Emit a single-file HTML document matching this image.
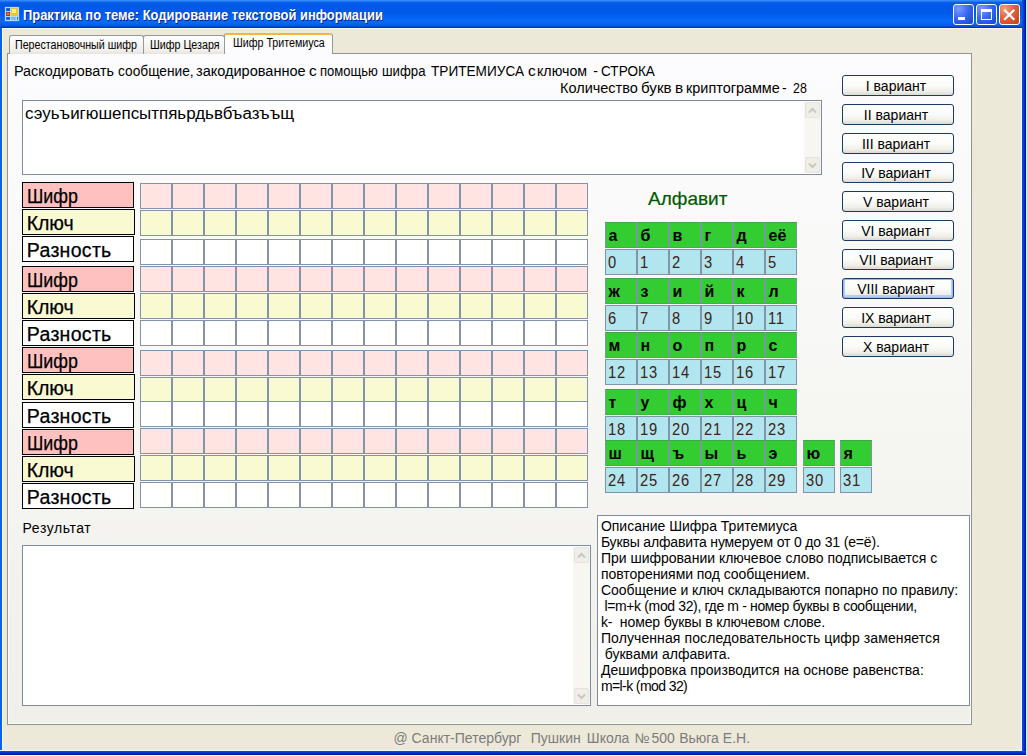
<!DOCTYPE html>
<html><head><meta charset="utf-8">
<style>
*{box-sizing:border-box}
html,body{margin:0;padding:0}
body{width:1027px;height:756px;position:relative;overflow:hidden;background:#ECE9D8;font-family:"Liberation Sans",sans-serif;color:#000}
.a{position:absolute}
.tx{white-space:pre}
#title{left:0;top:0;width:1027px;height:28px;background:linear-gradient(#3a93ff 0px,#2a80f8 1px,#0a5ee8 2.5px,#0058e6 5px,#0059e8 13px,#0466f4 19px,#086afa 21px,#0464f2 24px,#0054dc 26px,#0036b0 27.5px)}
.tb{width:21px;height:21px;top:4px;border:1px solid #fff;border-radius:3px;background:radial-gradient(circle at 25% 20%,#7a9cff,#3a6af0 45%,#2050e0 80%,#1a48d8)}
#tclose{background:radial-gradient(circle at 25% 20%,#f0a080,#e06040 45%,#d04a20 80%,#c04018)}
#page{left:7px;top:53px;width:965px;height:672px;border:1px solid #8f9494;box-shadow:inset -1px -1px 0 #fbfbf8,inset 1px 0 0 #fcfcfc;background:linear-gradient(#fcfcfe 0%,#f8f8f6 40%,#f0efe9 100%)}
.tab{top:35px;height:19px;border:1px solid #919b9c;border-bottom:none;border-radius:3px 3px 0 0;background:linear-gradient(#fefefe,#f0efea 80%,#e6e4dc);font-size:11px;white-space:pre;padding-top:2px}
.lb{left:22px;width:112px;height:26px;border:1px solid #000}
.c{width:32px;height:26px;border:1px solid #8294ac}
.g{width:32px;height:26px;border:1px solid #7a98a0;border-top-color:#3aa846;border-bottom-color:#36b83c;background:#33cc33}
.bl{width:32px;height:26px;border:1px solid #8294ac;background:#b2e6ee}
.btn{left:842px;width:112px;height:21px;border:1px solid #1a3a68;border-radius:3px;background:linear-gradient(#ffffff 0%,#fbfbf9 50%,#f0efe8 80%,#dcdad0 100%);font-size:14px;text-align:center;line-height:21px;white-space:pre}
.btn span{display:inline-block;transform:scaleX(1.0);position:relative;left:-2px}
.sb{background:#f4f3ee}
</style></head><body>
<div id="title" class="a"></div>
<div class="a tx" style="left:22.87680412371134px;top:6.19px;font-size:14px;line-height:18px;transform:scaleX(0.9232);transform-origin:0 0;font-weight:bold;color:#fff;text-shadow:1px 1px 0 #0a1e8c">Практика по теме: Кодирование текстовой информации</div>
<div class="a" style="left:0;top:28px;width:1027px;height:1px;background:#f6f6fc"></div>
<div class="a" style="left:0;top:28px;width:2px;height:723px;background:#0a60f0"></div>
<div class="a" style="left:2px;top:28px;width:1px;height:723px;background:#f8f8fc"></div>
<div class="a" style="left:1021px;top:28px;width:1px;height:723px;background:#f8f8fc"></div>
<div class="a" style="left:1022px;top:0px;width:4px;height:755px;background:linear-gradient(90deg,#0a58ee,#0030c0 60%,#001890)"></div>
<div class="a" style="left:1026px;top:0;width:1px;height:756px;background:#dce6fa"></div>
<div class="a" style="left:0;top:750px;width:1022px;height:1px;background:#f4f6fc"></div>
<div class="a" style="left:0;top:751px;width:1026px;height:4px;background:linear-gradient(#0a4ee0,#0030c0 50%,#00168c)"></div>
<div class="a" style="left:0;top:755px;width:1027px;height:1px;background:#f8f8fc"></div>
<div class="a tb" style="left:953px"></div>
<div class="a tb" style="left:976px"></div>
<div class="a tb" id="tclose" style="left:999px"></div>
<div class="a" style="left:958px;top:17px;width:7px;height:3px;background:#fff"></div>
<div class="a" style="left:981px;top:9px;width:11px;height:11px;border:1px solid #fff;border-top:3px solid #fff"></div>
<svg class="a" style="left:999px;top:4px" width="21" height="21"><path d="M5.2 5.7 L15.3 15.8 M15.3 5.7 L5.2 15.8" stroke="#fff" stroke-width="2.3" stroke-linecap="butt"/></svg>
<svg class="a" style="left:0;top:0" width="24" height="26"><rect x="5.5" y="7.5" width="13" height="13" fill="none" stroke="#b4dcff" stroke-width="1.2"/><path d="M10.5 7.5V20.5 M5.5 11.5H10.5 M5.5 16.5H18.5 M16.5 16.5V20.5" stroke="#b4dcff" stroke-width="1"/><rect x="6" y="12" width="4" height="4" fill="#c03020"/><rect x="7" y="13" width="2" height="2" fill="#f07050"/><rect x="11" y="8" width="7" height="8" fill="#e8c830"/><rect x="12" y="9" width="4" height="4" fill="#fff080"/><rect x="11" y="17" width="5" height="3" fill="#80b8f0"/></svg>
<div id="page" class="a"></div>
<div class="a tab" style="left:9px;width:135px"></div>
<div class="a tab" style="left:143px;width:82px"></div>
<div class="a tab" style="left:224px;width:109px;top:33px;height:21px;background:#fcfcfe;border-top:2px solid #f5b445"></div>
<div class="a tx" style="left:15.2px;top:37.96px;font-size:12px;line-height:15px;transform:scaleX(0.89);transform-origin:0 0">Перестановочный шифр</div>
<div class="a tx" style="left:150.2px;top:37.96px;font-size:12px;line-height:15px;transform:scaleX(0.89);transform-origin:0 0">Шифр Цезаря</div>
<div class="a tx" style="left:232.5px;top:35.96px;font-size:12px;line-height:15px;transform:scaleX(0.89);transform-origin:0 0">Шифр Тритемиуса</div>
<div class="a tx" style="left:14.072916666666666px;top:62.09px;font-size:14px;line-height:18px;transform:scaleX(1.0271);transform-origin:0 0;">Раскодировать</div>
<div class="a tx" style="left:117.81866666666666px;top:62.09px;font-size:14px;line-height:18px;transform:scaleX(0.9813);transform-origin:0 0;">сообщение,</div>
<div class="a tx" style="left:195.6625px;top:62.09px;font-size:14px;line-height:18px;transform:scaleX(1.0375);transform-origin:0 0;">закодированное</div>
<div class="a tx" style="left:309.29999999999995px;top:62.09px;font-size:14px;line-height:18px;transform:scaleX(1.1000);transform-origin:0 0;">с</div>
<div class="a tx" style="left:319.7672131147541px;top:62.09px;font-size:14px;line-height:18px;transform:scaleX(0.9328);transform-origin:0 0;">помощью</div>
<div class="a tx" style="left:381.7577777777778px;top:62.09px;font-size:14px;line-height:18px;transform:scaleX(0.9422);transform-origin:0 0;">шифра</div>
<div class="a tx" style="left:431.0px;top:62.09px;font-size:14px;line-height:18px;transform:scaleX(0.9729);transform-origin:0 0;">ТРИТЕМИУСА</div>
<div class="a tx" style="left:527.6999999999999px;top:62.09px;font-size:14px;line-height:18px;transform:scaleX(1.1000);transform-origin:0 0;">с</div>
<div class="a tx" style="left:537.2854166666666px;top:62.09px;font-size:14px;line-height:18px;transform:scaleX(1.0146);transform-origin:0 0;">ключом</div>
<div class="a tx" style="left:600.6309090909091px;top:62.09px;font-size:14px;line-height:18px;transform:scaleX(0.9691);transform-origin:0 0;">СТРОКА</div>
<div class="a tx" style="left:593.3px;top:62.09px;font-size:14px;line-height:18px;">-</div>
<div class="a tx" style="left:559.9648648648649px;top:78.59px;font-size:14px;line-height:18px;transform:scaleX(1.0351);transform-origin:0 0;">Количество</div>
<div class="a tx" style="left:640.9185185185186px;top:78.59px;font-size:14px;line-height:18px;transform:scaleX(1.0815);transform-origin:0 0;">букв</div>
<div class="a tx" style="left:674.5px;top:78.59px;font-size:14px;line-height:18px;transform:scaleX(1.1000);transform-origin:0 0;">в</div>
<div class="a tx" style="left:685.57px;top:78.59px;font-size:14px;line-height:18px;transform:scaleX(1.0300);transform-origin:0 0;">криптограмме</div>
<div class="a tx" style="left:793.0142857142857px;top:78.59px;font-size:14px;line-height:18px;transform:scaleX(0.8857);transform-origin:0 0;">28</div>
<div class="a tx" style="left:782px;top:78.59px;font-size:14px;line-height:18px;">-</div>
<div class="a" style="left:22px;top:100px;width:800px;height:75px;border:1px solid #7d8aa0;background:#fff"></div>
<div class="a tx" style="left:24.54189723320158px;top:103.72px;font-size:16px;line-height:20px;transform:scaleX(1.0581);transform-origin:0 0;">сэуьъигюшепсытпяьрдьвбъазъъщ</div>
<svg class="a" style="left:804px;top:102px" width="17" height="71"><rect x="0" y="0" width="17" height="71" fill="#f7f6f1"/><rect x="1.5" y="0.5" width="14" height="15" rx="1.5" fill="#efeee8" stroke="#e6e4dc"/><rect x="1.5" y="55.5" width="14" height="15" rx="1.5" fill="#efeee8" stroke="#e6e4dc"/><path d="M5 10.5 L8.5 7 L12 10.5" fill="none" stroke="#c8c7c0" stroke-width="2"/><path d="M5 61.5 L8.5 65 L12 61.5" fill="none" stroke="#c8c7c0" stroke-width="2"/></svg>
<div class="a lb" style="top:182px;background:#ffc0c0"></div>
<div class="a tx" style="left:26.8px;top:183.69px;font-size:19.5px;line-height:24px;letter-spacing:0px;-webkit-text-stroke:0.25px #000;transform:scaleX(0.915);transform-origin:0 0">Шифр</div>
<div class="a lb" style="top:209px;background:#fafad2;width:113px"></div>
<div class="a tx" style="left:26.8px;top:210.69px;font-size:19.5px;line-height:24px;letter-spacing:-0.1px;-webkit-text-stroke:0.25px #000">Ключ</div>
<div class="a lb" style="top:236px;background:#ffffff"></div>
<div class="a tx" style="left:26.8px;top:237.69px;font-size:19.5px;line-height:24px;letter-spacing:0.3px;-webkit-text-stroke:0.25px #000">Разность</div>
<div class="a lb" style="top:266px;background:#ffc0c0"></div>
<div class="a tx" style="left:26.8px;top:267.69px;font-size:19.5px;line-height:24px;letter-spacing:0px;-webkit-text-stroke:0.25px #000;transform:scaleX(0.915);transform-origin:0 0">Шифр</div>
<div class="a lb" style="top:293px;background:#fafad2;width:113px"></div>
<div class="a tx" style="left:26.8px;top:294.69px;font-size:19.5px;line-height:24px;letter-spacing:-0.1px;-webkit-text-stroke:0.25px #000">Ключ</div>
<div class="a lb" style="top:320px;background:#ffffff"></div>
<div class="a tx" style="left:26.8px;top:321.69px;font-size:19.5px;line-height:24px;letter-spacing:0.3px;-webkit-text-stroke:0.25px #000">Разность</div>
<div class="a lb" style="top:347px;background:#ffc0c0"></div>
<div class="a tx" style="left:26.8px;top:348.69px;font-size:19.5px;line-height:24px;letter-spacing:0px;-webkit-text-stroke:0.25px #000;transform:scaleX(0.915);transform-origin:0 0">Шифр</div>
<div class="a lb" style="top:374px;background:#fafad2;width:113px"></div>
<div class="a tx" style="left:26.8px;top:375.69px;font-size:19.5px;line-height:24px;letter-spacing:-0.1px;-webkit-text-stroke:0.25px #000">Ключ</div>
<div class="a lb" style="top:402px;background:#ffffff"></div>
<div class="a tx" style="left:26.8px;top:403.69px;font-size:19.5px;line-height:24px;letter-spacing:0.3px;-webkit-text-stroke:0.25px #000">Разность</div>
<div class="a lb" style="top:429px;background:#ffc0c0"></div>
<div class="a tx" style="left:26.8px;top:430.69px;font-size:19.5px;line-height:24px;letter-spacing:0px;-webkit-text-stroke:0.25px #000;transform:scaleX(0.915);transform-origin:0 0">Шифр</div>
<div class="a lb" style="top:456px;background:#fafad2;width:113px"></div>
<div class="a tx" style="left:26.8px;top:457.69px;font-size:19.5px;line-height:24px;letter-spacing:-0.1px;-webkit-text-stroke:0.25px #000">Ключ</div>
<div class="a lb" style="top:483px;background:#ffffff"></div>
<div class="a tx" style="left:26.8px;top:484.69px;font-size:19.5px;line-height:24px;letter-spacing:0.3px;-webkit-text-stroke:0.25px #000">Разность</div>
<div class="a c" style="left:140px;top:183px;background:#ffe4e1"></div><div class="a c" style="left:172px;top:183px;background:#ffe4e1"></div><div class="a c" style="left:204px;top:183px;background:#ffe4e1"></div><div class="a c" style="left:236px;top:183px;background:#ffe4e1"></div><div class="a c" style="left:268px;top:183px;background:#ffe4e1"></div><div class="a c" style="left:300px;top:183px;background:#ffe4e1"></div><div class="a c" style="left:332px;top:183px;background:#ffe4e1"></div><div class="a c" style="left:364px;top:183px;background:#ffe4e1"></div><div class="a c" style="left:396px;top:183px;background:#ffe4e1"></div><div class="a c" style="left:428px;top:183px;background:#ffe4e1"></div><div class="a c" style="left:460px;top:183px;background:#ffe4e1"></div><div class="a c" style="left:492px;top:183px;background:#ffe4e1"></div><div class="a c" style="left:524px;top:183px;background:#ffe4e1"></div><div class="a c" style="left:556px;top:183px;background:#ffe4e1"></div>
<div class="a c" style="left:140px;top:210px;background:#fafad2"></div><div class="a c" style="left:172px;top:210px;background:#fafad2"></div><div class="a c" style="left:204px;top:210px;background:#fafad2"></div><div class="a c" style="left:236px;top:210px;background:#fafad2"></div><div class="a c" style="left:268px;top:210px;background:#fafad2"></div><div class="a c" style="left:300px;top:210px;background:#fafad2"></div><div class="a c" style="left:332px;top:210px;background:#fafad2"></div><div class="a c" style="left:364px;top:210px;background:#fafad2"></div><div class="a c" style="left:396px;top:210px;background:#fafad2"></div><div class="a c" style="left:428px;top:210px;background:#fafad2"></div><div class="a c" style="left:460px;top:210px;background:#fafad2"></div><div class="a c" style="left:492px;top:210px;background:#fafad2"></div><div class="a c" style="left:524px;top:210px;background:#fafad2"></div><div class="a c" style="left:556px;top:210px;background:#fafad2"></div>
<div class="a c" style="left:140px;top:239px;background:#ffffff"></div><div class="a c" style="left:172px;top:239px;background:#ffffff"></div><div class="a c" style="left:204px;top:239px;background:#ffffff"></div><div class="a c" style="left:236px;top:239px;background:#ffffff"></div><div class="a c" style="left:268px;top:239px;background:#ffffff"></div><div class="a c" style="left:300px;top:239px;background:#ffffff"></div><div class="a c" style="left:332px;top:239px;background:#ffffff"></div><div class="a c" style="left:364px;top:239px;background:#ffffff"></div><div class="a c" style="left:396px;top:239px;background:#ffffff"></div><div class="a c" style="left:428px;top:239px;background:#ffffff"></div><div class="a c" style="left:460px;top:239px;background:#ffffff"></div><div class="a c" style="left:492px;top:239px;background:#ffffff"></div><div class="a c" style="left:524px;top:239px;background:#ffffff"></div><div class="a c" style="left:556px;top:239px;background:#ffffff"></div>
<div class="a c" style="left:140px;top:266px;background:#ffe4e1"></div><div class="a c" style="left:172px;top:266px;background:#ffe4e1"></div><div class="a c" style="left:204px;top:266px;background:#ffe4e1"></div><div class="a c" style="left:236px;top:266px;background:#ffe4e1"></div><div class="a c" style="left:268px;top:266px;background:#ffe4e1"></div><div class="a c" style="left:300px;top:266px;background:#ffe4e1"></div><div class="a c" style="left:332px;top:266px;background:#ffe4e1"></div><div class="a c" style="left:364px;top:266px;background:#ffe4e1"></div><div class="a c" style="left:396px;top:266px;background:#ffe4e1"></div><div class="a c" style="left:428px;top:266px;background:#ffe4e1"></div><div class="a c" style="left:460px;top:266px;background:#ffe4e1"></div><div class="a c" style="left:492px;top:266px;background:#ffe4e1"></div><div class="a c" style="left:524px;top:266px;background:#ffe4e1"></div><div class="a c" style="left:556px;top:266px;background:#ffe4e1"></div>
<div class="a c" style="left:140px;top:293px;background:#fafad2"></div><div class="a c" style="left:172px;top:293px;background:#fafad2"></div><div class="a c" style="left:204px;top:293px;background:#fafad2"></div><div class="a c" style="left:236px;top:293px;background:#fafad2"></div><div class="a c" style="left:268px;top:293px;background:#fafad2"></div><div class="a c" style="left:300px;top:293px;background:#fafad2"></div><div class="a c" style="left:332px;top:293px;background:#fafad2"></div><div class="a c" style="left:364px;top:293px;background:#fafad2"></div><div class="a c" style="left:396px;top:293px;background:#fafad2"></div><div class="a c" style="left:428px;top:293px;background:#fafad2"></div><div class="a c" style="left:460px;top:293px;background:#fafad2"></div><div class="a c" style="left:492px;top:293px;background:#fafad2"></div><div class="a c" style="left:524px;top:293px;background:#fafad2"></div><div class="a c" style="left:556px;top:293px;background:#fafad2"></div>
<div class="a c" style="left:140px;top:320px;background:#ffffff"></div><div class="a c" style="left:172px;top:320px;background:#ffffff"></div><div class="a c" style="left:204px;top:320px;background:#ffffff"></div><div class="a c" style="left:236px;top:320px;background:#ffffff"></div><div class="a c" style="left:268px;top:320px;background:#ffffff"></div><div class="a c" style="left:300px;top:320px;background:#ffffff"></div><div class="a c" style="left:332px;top:320px;background:#ffffff"></div><div class="a c" style="left:364px;top:320px;background:#ffffff"></div><div class="a c" style="left:396px;top:320px;background:#ffffff"></div><div class="a c" style="left:428px;top:320px;background:#ffffff"></div><div class="a c" style="left:460px;top:320px;background:#ffffff"></div><div class="a c" style="left:492px;top:320px;background:#ffffff"></div><div class="a c" style="left:524px;top:320px;background:#ffffff"></div><div class="a c" style="left:556px;top:320px;background:#ffffff"></div>
<div class="a c" style="left:140px;top:350px;background:#ffe4e1"></div><div class="a c" style="left:172px;top:350px;background:#ffe4e1"></div><div class="a c" style="left:204px;top:350px;background:#ffe4e1"></div><div class="a c" style="left:236px;top:350px;background:#ffe4e1"></div><div class="a c" style="left:268px;top:350px;background:#ffe4e1"></div><div class="a c" style="left:300px;top:350px;background:#ffe4e1"></div><div class="a c" style="left:332px;top:350px;background:#ffe4e1"></div><div class="a c" style="left:364px;top:350px;background:#ffe4e1"></div><div class="a c" style="left:396px;top:350px;background:#ffe4e1"></div><div class="a c" style="left:428px;top:350px;background:#ffe4e1"></div><div class="a c" style="left:460px;top:350px;background:#ffe4e1"></div><div class="a c" style="left:492px;top:350px;background:#ffe4e1"></div><div class="a c" style="left:524px;top:350px;background:#ffe4e1"></div><div class="a c" style="left:556px;top:350px;background:#ffe4e1"></div>
<div class="a c" style="left:140px;top:377px;background:#fafad2"></div><div class="a c" style="left:172px;top:377px;background:#fafad2"></div><div class="a c" style="left:204px;top:377px;background:#fafad2"></div><div class="a c" style="left:236px;top:377px;background:#fafad2"></div><div class="a c" style="left:268px;top:377px;background:#fafad2"></div><div class="a c" style="left:300px;top:377px;background:#fafad2"></div><div class="a c" style="left:332px;top:377px;background:#fafad2"></div><div class="a c" style="left:364px;top:377px;background:#fafad2"></div><div class="a c" style="left:396px;top:377px;background:#fafad2"></div><div class="a c" style="left:428px;top:377px;background:#fafad2"></div><div class="a c" style="left:460px;top:377px;background:#fafad2"></div><div class="a c" style="left:492px;top:377px;background:#fafad2"></div><div class="a c" style="left:524px;top:377px;background:#fafad2"></div><div class="a c" style="left:556px;top:377px;background:#fafad2"></div>
<div class="a c" style="left:140px;top:401px;background:#ffffff"></div><div class="a c" style="left:172px;top:401px;background:#ffffff"></div><div class="a c" style="left:204px;top:401px;background:#ffffff"></div><div class="a c" style="left:236px;top:401px;background:#ffffff"></div><div class="a c" style="left:268px;top:401px;background:#ffffff"></div><div class="a c" style="left:300px;top:401px;background:#ffffff"></div><div class="a c" style="left:332px;top:401px;background:#ffffff"></div><div class="a c" style="left:364px;top:401px;background:#ffffff"></div><div class="a c" style="left:396px;top:401px;background:#ffffff"></div><div class="a c" style="left:428px;top:401px;background:#ffffff"></div><div class="a c" style="left:460px;top:401px;background:#ffffff"></div><div class="a c" style="left:492px;top:401px;background:#ffffff"></div><div class="a c" style="left:524px;top:401px;background:#ffffff"></div><div class="a c" style="left:556px;top:401px;background:#ffffff"></div>
<div class="a c" style="left:140px;top:428px;background:#ffe4e1"></div><div class="a c" style="left:172px;top:428px;background:#ffe4e1"></div><div class="a c" style="left:204px;top:428px;background:#ffe4e1"></div><div class="a c" style="left:236px;top:428px;background:#ffe4e1"></div><div class="a c" style="left:268px;top:428px;background:#ffe4e1"></div><div class="a c" style="left:300px;top:428px;background:#ffe4e1"></div><div class="a c" style="left:332px;top:428px;background:#ffe4e1"></div><div class="a c" style="left:364px;top:428px;background:#ffe4e1"></div><div class="a c" style="left:396px;top:428px;background:#ffe4e1"></div><div class="a c" style="left:428px;top:428px;background:#ffe4e1"></div><div class="a c" style="left:460px;top:428px;background:#ffe4e1"></div><div class="a c" style="left:492px;top:428px;background:#ffe4e1"></div><div class="a c" style="left:524px;top:428px;background:#ffe4e1"></div><div class="a c" style="left:556px;top:428px;background:#ffe4e1"></div>
<div class="a c" style="left:140px;top:455px;background:#fafad2"></div><div class="a c" style="left:172px;top:455px;background:#fafad2"></div><div class="a c" style="left:204px;top:455px;background:#fafad2"></div><div class="a c" style="left:236px;top:455px;background:#fafad2"></div><div class="a c" style="left:268px;top:455px;background:#fafad2"></div><div class="a c" style="left:300px;top:455px;background:#fafad2"></div><div class="a c" style="left:332px;top:455px;background:#fafad2"></div><div class="a c" style="left:364px;top:455px;background:#fafad2"></div><div class="a c" style="left:396px;top:455px;background:#fafad2"></div><div class="a c" style="left:428px;top:455px;background:#fafad2"></div><div class="a c" style="left:460px;top:455px;background:#fafad2"></div><div class="a c" style="left:492px;top:455px;background:#fafad2"></div><div class="a c" style="left:524px;top:455px;background:#fafad2"></div><div class="a c" style="left:556px;top:455px;background:#fafad2"></div>
<div class="a c" style="left:140px;top:482px;background:#ffffff"></div><div class="a c" style="left:172px;top:482px;background:#ffffff"></div><div class="a c" style="left:204px;top:482px;background:#ffffff"></div><div class="a c" style="left:236px;top:482px;background:#ffffff"></div><div class="a c" style="left:268px;top:482px;background:#ffffff"></div><div class="a c" style="left:300px;top:482px;background:#ffffff"></div><div class="a c" style="left:332px;top:482px;background:#ffffff"></div><div class="a c" style="left:364px;top:482px;background:#ffffff"></div><div class="a c" style="left:396px;top:482px;background:#ffffff"></div><div class="a c" style="left:428px;top:482px;background:#ffffff"></div><div class="a c" style="left:460px;top:482px;background:#ffffff"></div><div class="a c" style="left:492px;top:482px;background:#ffffff"></div><div class="a c" style="left:524px;top:482px;background:#ffffff"></div><div class="a c" style="left:556px;top:482px;background:#ffffff"></div>
<div class="a tx" style="left:648px;top:187.31px;font-size:19px;line-height:24px;color:#005a00;-webkit-text-stroke:0.2px #005a00">Алфавит</div>
<div class="a g" style="left:605px;top:222px"></div><div class="a tx" style="left:608.5px;top:226.46px;font-size:16px;line-height:20px;font-weight:bold">а</div>
<div class="a bl" style="left:605px;top:249px"></div><div class="a tx" style="left:608.4px;top:252.66px;font-size:16px;line-height:20px;color:#402020;letter-spacing:0.8px;transform:scaleX(0.92);transform-origin:0 0">0</div>
<div class="a g" style="left:637px;top:222px"></div><div class="a tx" style="left:640.5px;top:226.46px;font-size:16px;line-height:20px;font-weight:bold">б</div>
<div class="a bl" style="left:637px;top:249px"></div><div class="a tx" style="left:640.4px;top:252.66px;font-size:16px;line-height:20px;color:#402020;letter-spacing:0.8px;transform:scaleX(0.92);transform-origin:0 0">1</div>
<div class="a g" style="left:669px;top:222px"></div><div class="a tx" style="left:672.5px;top:226.46px;font-size:16px;line-height:20px;font-weight:bold">в</div>
<div class="a bl" style="left:669px;top:249px"></div><div class="a tx" style="left:672.4px;top:252.66px;font-size:16px;line-height:20px;color:#402020;letter-spacing:0.8px;transform:scaleX(0.92);transform-origin:0 0">2</div>
<div class="a g" style="left:701px;top:222px"></div><div class="a tx" style="left:704.5px;top:226.46px;font-size:16px;line-height:20px;font-weight:bold">г</div>
<div class="a bl" style="left:701px;top:249px"></div><div class="a tx" style="left:704.4px;top:252.66px;font-size:16px;line-height:20px;color:#402020;letter-spacing:0.8px;transform:scaleX(0.92);transform-origin:0 0">3</div>
<div class="a g" style="left:733px;top:222px"></div><div class="a tx" style="left:736.5px;top:226.46px;font-size:16px;line-height:20px;font-weight:bold">д</div>
<div class="a bl" style="left:733px;top:249px"></div><div class="a tx" style="left:736.4px;top:252.66px;font-size:16px;line-height:20px;color:#402020;letter-spacing:0.8px;transform:scaleX(0.92);transform-origin:0 0">4</div>
<div class="a g" style="left:765px;top:222px"></div><div class="a tx" style="left:768.5px;top:226.46px;font-size:16px;line-height:20px;font-weight:bold">её</div>
<div class="a bl" style="left:765px;top:249px"></div><div class="a tx" style="left:768.4px;top:252.66px;font-size:16px;line-height:20px;color:#402020;letter-spacing:0.8px;transform:scaleX(0.92);transform-origin:0 0">5</div>

<div class="a g" style="left:605px;top:278px"></div><div class="a tx" style="left:608.5px;top:282.46px;font-size:16px;line-height:20px;font-weight:bold">ж</div>
<div class="a bl" style="left:605px;top:305px"></div><div class="a tx" style="left:608.4px;top:308.66px;font-size:16px;line-height:20px;color:#402020;letter-spacing:0.8px;transform:scaleX(0.92);transform-origin:0 0">6</div>
<div class="a g" style="left:637px;top:278px"></div><div class="a tx" style="left:640.5px;top:282.46px;font-size:16px;line-height:20px;font-weight:bold">з</div>
<div class="a bl" style="left:637px;top:305px"></div><div class="a tx" style="left:640.4px;top:308.66px;font-size:16px;line-height:20px;color:#402020;letter-spacing:0.8px;transform:scaleX(0.92);transform-origin:0 0">7</div>
<div class="a g" style="left:669px;top:278px"></div><div class="a tx" style="left:672.5px;top:282.46px;font-size:16px;line-height:20px;font-weight:bold">и</div>
<div class="a bl" style="left:669px;top:305px"></div><div class="a tx" style="left:672.4px;top:308.66px;font-size:16px;line-height:20px;color:#402020;letter-spacing:0.8px;transform:scaleX(0.92);transform-origin:0 0">8</div>
<div class="a g" style="left:701px;top:278px"></div><div class="a tx" style="left:704.5px;top:282.46px;font-size:16px;line-height:20px;font-weight:bold">й</div>
<div class="a bl" style="left:701px;top:305px"></div><div class="a tx" style="left:704.4px;top:308.66px;font-size:16px;line-height:20px;color:#402020;letter-spacing:0.8px;transform:scaleX(0.92);transform-origin:0 0">9</div>
<div class="a g" style="left:733px;top:278px"></div><div class="a tx" style="left:736.5px;top:282.46px;font-size:16px;line-height:20px;font-weight:bold">к</div>
<div class="a bl" style="left:733px;top:305px"></div><div class="a tx" style="left:736.4px;top:308.66px;font-size:16px;line-height:20px;color:#402020;letter-spacing:0.8px;transform:scaleX(0.92);transform-origin:0 0">10</div>
<div class="a g" style="left:765px;top:278px"></div><div class="a tx" style="left:768.5px;top:282.46px;font-size:16px;line-height:20px;font-weight:bold">л</div>
<div class="a bl" style="left:765px;top:305px"></div><div class="a tx" style="left:768.4px;top:308.66px;font-size:16px;line-height:20px;color:#402020;letter-spacing:0.8px;transform:scaleX(0.92);transform-origin:0 0">11</div>

<div class="a g" style="left:605px;top:332px"></div><div class="a tx" style="left:608.5px;top:336.46px;font-size:16px;line-height:20px;font-weight:bold">м</div>
<div class="a bl" style="left:605px;top:359px"></div><div class="a tx" style="left:608.4px;top:362.66px;font-size:16px;line-height:20px;color:#402020;letter-spacing:0.8px;transform:scaleX(0.92);transform-origin:0 0">12</div>
<div class="a g" style="left:637px;top:332px"></div><div class="a tx" style="left:640.5px;top:336.46px;font-size:16px;line-height:20px;font-weight:bold">н</div>
<div class="a bl" style="left:637px;top:359px"></div><div class="a tx" style="left:640.4px;top:362.66px;font-size:16px;line-height:20px;color:#402020;letter-spacing:0.8px;transform:scaleX(0.92);transform-origin:0 0">13</div>
<div class="a g" style="left:669px;top:332px"></div><div class="a tx" style="left:672.5px;top:336.46px;font-size:16px;line-height:20px;font-weight:bold">о</div>
<div class="a bl" style="left:669px;top:359px"></div><div class="a tx" style="left:672.4px;top:362.66px;font-size:16px;line-height:20px;color:#402020;letter-spacing:0.8px;transform:scaleX(0.92);transform-origin:0 0">14</div>
<div class="a g" style="left:701px;top:332px"></div><div class="a tx" style="left:704.5px;top:336.46px;font-size:16px;line-height:20px;font-weight:bold">п</div>
<div class="a bl" style="left:701px;top:359px"></div><div class="a tx" style="left:704.4px;top:362.66px;font-size:16px;line-height:20px;color:#402020;letter-spacing:0.8px;transform:scaleX(0.92);transform-origin:0 0">15</div>
<div class="a g" style="left:733px;top:332px"></div><div class="a tx" style="left:736.5px;top:336.46px;font-size:16px;line-height:20px;font-weight:bold">р</div>
<div class="a bl" style="left:733px;top:359px"></div><div class="a tx" style="left:736.4px;top:362.66px;font-size:16px;line-height:20px;color:#402020;letter-spacing:0.8px;transform:scaleX(0.92);transform-origin:0 0">16</div>
<div class="a g" style="left:765px;top:332px"></div><div class="a tx" style="left:768.5px;top:336.46px;font-size:16px;line-height:20px;font-weight:bold">с</div>
<div class="a bl" style="left:765px;top:359px"></div><div class="a tx" style="left:768.4px;top:362.66px;font-size:16px;line-height:20px;color:#402020;letter-spacing:0.8px;transform:scaleX(0.92);transform-origin:0 0">17</div>

<div class="a g" style="left:605px;top:389px"></div><div class="a tx" style="left:608.5px;top:393.46px;font-size:16px;line-height:20px;font-weight:bold">т</div>
<div class="a bl" style="left:605px;top:416px"></div><div class="a tx" style="left:608.4px;top:419.66px;font-size:16px;line-height:20px;color:#402020;letter-spacing:0.8px;transform:scaleX(0.92);transform-origin:0 0">18</div>
<div class="a g" style="left:637px;top:389px"></div><div class="a tx" style="left:640.5px;top:393.46px;font-size:16px;line-height:20px;font-weight:bold">у</div>
<div class="a bl" style="left:637px;top:416px"></div><div class="a tx" style="left:640.4px;top:419.66px;font-size:16px;line-height:20px;color:#402020;letter-spacing:0.8px;transform:scaleX(0.92);transform-origin:0 0">19</div>
<div class="a g" style="left:669px;top:389px"></div><div class="a tx" style="left:672.5px;top:393.46px;font-size:16px;line-height:20px;font-weight:bold">ф</div>
<div class="a bl" style="left:669px;top:416px"></div><div class="a tx" style="left:672.4px;top:419.66px;font-size:16px;line-height:20px;color:#402020;letter-spacing:0.8px;transform:scaleX(0.92);transform-origin:0 0">20</div>
<div class="a g" style="left:701px;top:389px"></div><div class="a tx" style="left:704.5px;top:393.46px;font-size:16px;line-height:20px;font-weight:bold">х</div>
<div class="a bl" style="left:701px;top:416px"></div><div class="a tx" style="left:704.4px;top:419.66px;font-size:16px;line-height:20px;color:#402020;letter-spacing:0.8px;transform:scaleX(0.92);transform-origin:0 0">21</div>
<div class="a g" style="left:733px;top:389px"></div><div class="a tx" style="left:736.5px;top:393.46px;font-size:16px;line-height:20px;font-weight:bold">ц</div>
<div class="a bl" style="left:733px;top:416px"></div><div class="a tx" style="left:736.4px;top:419.66px;font-size:16px;line-height:20px;color:#402020;letter-spacing:0.8px;transform:scaleX(0.92);transform-origin:0 0">22</div>
<div class="a g" style="left:765px;top:389px"></div><div class="a tx" style="left:768.5px;top:393.46px;font-size:16px;line-height:20px;font-weight:bold">ч</div>
<div class="a bl" style="left:765px;top:416px"></div><div class="a tx" style="left:768.4px;top:419.66px;font-size:16px;line-height:20px;color:#402020;letter-spacing:0.8px;transform:scaleX(0.92);transform-origin:0 0">23</div>

<div class="a g" style="left:605px;top:440px"></div><div class="a tx" style="left:608.5px;top:444.46px;font-size:16px;line-height:20px;font-weight:bold">ш</div>
<div class="a bl" style="left:605px;top:467px"></div><div class="a tx" style="left:608.4px;top:470.66px;font-size:16px;line-height:20px;color:#402020;letter-spacing:0.8px;transform:scaleX(0.92);transform-origin:0 0">24</div>
<div class="a g" style="left:637px;top:440px"></div><div class="a tx" style="left:640.5px;top:444.46px;font-size:16px;line-height:20px;font-weight:bold">щ</div>
<div class="a bl" style="left:637px;top:467px"></div><div class="a tx" style="left:640.4px;top:470.66px;font-size:16px;line-height:20px;color:#402020;letter-spacing:0.8px;transform:scaleX(0.92);transform-origin:0 0">25</div>
<div class="a g" style="left:669px;top:440px"></div><div class="a tx" style="left:672.5px;top:444.46px;font-size:16px;line-height:20px;font-weight:bold">ъ</div>
<div class="a bl" style="left:669px;top:467px"></div><div class="a tx" style="left:672.4px;top:470.66px;font-size:16px;line-height:20px;color:#402020;letter-spacing:0.8px;transform:scaleX(0.92);transform-origin:0 0">26</div>
<div class="a g" style="left:701px;top:440px"></div><div class="a tx" style="left:704.5px;top:444.46px;font-size:16px;line-height:20px;font-weight:bold">ы</div>
<div class="a bl" style="left:701px;top:467px"></div><div class="a tx" style="left:704.4px;top:470.66px;font-size:16px;line-height:20px;color:#402020;letter-spacing:0.8px;transform:scaleX(0.92);transform-origin:0 0">27</div>
<div class="a g" style="left:733px;top:440px"></div><div class="a tx" style="left:736.5px;top:444.46px;font-size:16px;line-height:20px;font-weight:bold">ь</div>
<div class="a bl" style="left:733px;top:467px"></div><div class="a tx" style="left:736.4px;top:470.66px;font-size:16px;line-height:20px;color:#402020;letter-spacing:0.8px;transform:scaleX(0.92);transform-origin:0 0">28</div>
<div class="a g" style="left:765px;top:440px"></div><div class="a tx" style="left:768.5px;top:444.46px;font-size:16px;line-height:20px;font-weight:bold">э</div>
<div class="a bl" style="left:765px;top:467px"></div><div class="a tx" style="left:768.4px;top:470.66px;font-size:16px;line-height:20px;color:#402020;letter-spacing:0.8px;transform:scaleX(0.92);transform-origin:0 0">29</div>
<div class="a g" style="left:803px;top:440px"></div><div class="a tx" style="left:806.5px;top:444.46px;font-size:16px;line-height:20px;font-weight:bold">ю</div>
<div class="a bl" style="left:803px;top:467px"></div><div class="a tx" style="left:806.4px;top:470.66px;font-size:16px;line-height:20px;color:#402020;letter-spacing:0.8px;transform:scaleX(0.92);transform-origin:0 0">30</div>
<div class="a g" style="left:840px;top:440px"></div><div class="a tx" style="left:843.5px;top:444.46px;font-size:16px;line-height:20px;font-weight:bold">я</div>
<div class="a bl" style="left:840px;top:467px"></div><div class="a tx" style="left:843.4px;top:470.66px;font-size:16px;line-height:20px;color:#402020;letter-spacing:0.8px;transform:scaleX(0.92);transform-origin:0 0">31</div>

<div class="a btn" style="top:75px"><span>I вариант</span></div>
<div class="a btn" style="top:104px"><span>II вариант</span></div>
<div class="a btn" style="top:133px"><span>III вариант</span></div>
<div class="a btn" style="top:162px"><span>IV вариант</span></div>
<div class="a btn" style="top:191px"><span>V вариант</span></div>
<div class="a btn" style="top:220px"><span>VI вариант</span></div>
<div class="a btn" style="top:249px"><span>VII вариант</span></div>
<div class="a btn" style="top:278px;box-shadow:inset 0 0 0 1px #9db8f0,inset 0 -1px 0 2px #b8cdf8"><span>VIII вариант</span></div>
<div class="a btn" style="top:307px"><span>IX вариант</span></div>
<div class="a btn" style="top:336px"><span>X вариант</span></div>
<div class="a tx" style="left:22.6px;top:519.39px;font-size:14px;line-height:18px;letter-spacing:0.55px">Результат</div>
<div class="a" style="left:22px;top:545px;width:569px;height:161px;border:1px solid #7d8aa0;background:#fff"></div>
<svg class="a" style="left:573px;top:547px" width="17" height="157"><rect x="0" y="0" width="17" height="157" fill="#f7f6f1"/><rect x="1.5" y="0.5" width="14" height="15" rx="1.5" fill="#efeee8" stroke="#e6e4dc"/><rect x="1.5" y="141.5" width="14" height="15" rx="1.5" fill="#efeee8" stroke="#e6e4dc"/><path d="M5 10.5 L8.5 7 L12 10.5" fill="none" stroke="#c8c7c0" stroke-width="2"/><path d="M5 147.5 L8.5 151 L12 147.5" fill="none" stroke="#c8c7c0" stroke-width="2"/></svg>
<div class="a" style="left:597px;top:515px;width:373px;height:191px;border:1px solid #7d8aa0;background:#fff"></div>
<div class="a tx" style="left:600.9px;top:517.29px;font-size:14px;line-height:18px;letter-spacing:0px">Описание Шифра Тритемиуса</div>
<div class="a tx" style="left:600.9px;top:533.29px;font-size:14px;line-height:18px;letter-spacing:-0.16px">Буквы алфавита нумеруем от 0 до 31 (е=ё).</div>
<div class="a tx" style="left:600.9px;top:549.29px;font-size:14px;line-height:18px;letter-spacing:0px">При шифровании ключевое слово подписывается с</div>
<div class="a tx" style="left:600.9px;top:565.29px;font-size:14px;line-height:18px;letter-spacing:-0.05px">повторениями под сообщением.</div>
<div class="a tx" style="left:600.9px;top:581.29px;font-size:14px;line-height:18px;letter-spacing:-0.05px">Сообщение и ключ складываются попарно по правилу:</div>
<div class="a tx" style="left:600.9px;top:597.29px;font-size:14px;line-height:18px;letter-spacing:-0.36px"> l=m+k (mod 32), где m - номер буквы в сообщении,</div>
<div class="a tx" style="left:600.9px;top:613.29px;font-size:14px;line-height:18px;letter-spacing:-0.12px">k-  номер буквы в ключевом слове.</div>
<div class="a tx" style="left:600.9px;top:629.29px;font-size:14px;line-height:18px;letter-spacing:0.1px">Полученная последовательность цифр заменяется</div>
<div class="a tx" style="left:600.9px;top:645.29px;font-size:14px;line-height:18px;letter-spacing:0px"> буквами алфавита.</div>
<div class="a tx" style="left:600.9px;top:661.29px;font-size:14px;line-height:18px;letter-spacing:0.04px">Дешифровка производится на основе равенства:</div>
<div class="a tx" style="left:600.9px;top:677.29px;font-size:14px;line-height:18px;letter-spacing:-0.59px">m=l-k (mod 32)</div>
<div class="a tx" style="left:393.5px;top:729.39px;font-size:14px;line-height:18px;color:#7c7c7c">@ Санкт-Петербург</div>
<div class="a tx" style="left:530.8px;top:729.39px;font-size:14px;line-height:18px;color:#7c7c7c">Пушкин</div>
<div class="a tx" style="left:586.8px;top:729.39px;font-size:14px;line-height:18px;color:#7c7c7c">Школа</div>
<div class="a tx" style="left:634.7px;top:729.39px;font-size:14px;line-height:18px;color:#7c7c7c">№</div>
<div class="a tx" style="left:651.5px;top:729.39px;font-size:14px;line-height:18px;color:#7c7c7c">500</div>
<div class="a tx" style="left:679.2px;top:729.39px;font-size:14px;line-height:18px;color:#7c7c7c">Вьюга Е.Н.</div>
</body></html>
